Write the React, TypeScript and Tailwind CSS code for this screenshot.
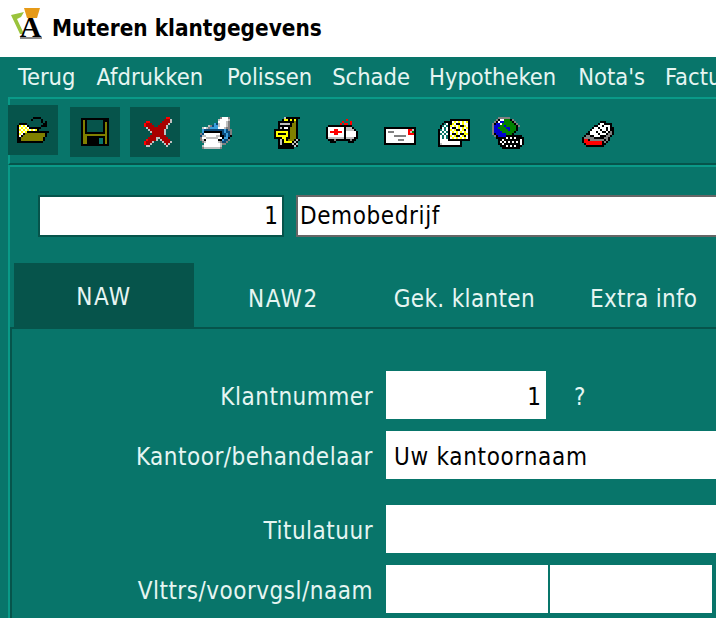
const colors: Record<string, string> = {
  k: '#000000',
  w: '#ffffff',
  g: '#c0c0c0',
  G: '#808080',
  y: '#ffff00',
  o: '#808000',
  r: '#ff0000',
  d: '#a80000',
  b: '#3a9fdc',
  B: '#0a4a7a',
  u: '#0000d0',
  n: '#008000',
  t: '#08756a',
}

// 2x scaled 16 colour toolbar bitmaps, one char per pixel
function PixelIcon({ rows, className }: { rows: string[]; className?: string }) {
  const cols = Math.max(...rows.map((r) => r.length))
  return (
    <svg
      width={cols * 2}
      height={rows.length * 2}
      viewBox={`0 0 ${cols} ${rows.length}`}
      shapeRendering="crispEdges"
      className={`block shrink-0 ${className ?? ''}`}
    >
      {rows.map((row, y) =>
        row.split('').map((c, x) => (colors[c] ? <rect key={`${x}-${y}`} x={x} y={y} width={1} height={1} fill={colors[c]} /> : null)),
      )}
    </svg>
  )
}

const openIcon = [
  '........kkkk....',
  '.......k....k...',
  '............k.k.',
  '.kkkk........kk.',
  'kywywk......kkk.',
  'kwywywkkkkkk....',
  'kywywywywyk.....',
  'kwywykkkkkkkkkkk',
  'kywkooooooooook.',
  'kwkoooooooooook.',
  'kkoooooooooook..',
  'kkoooooooooook..',
  'kkkkkkkkkkkkk...',
]
const saveIcon = [
  'kkkkkkkkkkkkkk',
  'kok........kkk',
  'kok........kok',
  'kok........kok',
  'kok........kok',
  'kok........kok',
  'kok........kok',
  'kokkkkkkkkkkok',
  'kooooooooooook',
  'kookkkkkkkkkok',
  'kookkkkkkttkok',
  'kookkkkkkttkok',
  'kookkkkkkttkok',
  'kkkkkkkkkkkkkk',
]
const deleteIcon = [
  '...........rr.',
  '..........dddg',
  '.rr......ddddg',
  'rddd....ddddg.',
  'rdddd..ddddg..',
  '.gdddddddddg..',
  '..gdddddddg...',
  '...gddddddg...',
  '....ddddddg...',
  '...dddddddd...',
  '..ddddggdddd..',
  '.rddddg.gdddd.',
  'rdddg....gdddg',
  'rddg......gdg.',
  '.gg........g..',
]
const printIcon = [
  '..........GwwwG.',
  '.........gwwwwg.',
  '.........wwwwgG.',
  '.......bBgwwwgG.',
  '....gGBbbgwwwgG.',
  '.gwgGbbbbwwwgGG.',
  '.bBBBBBBBBBBbBGG',
  '.bkkkkkkkkkBbBBG',
  'GBwwwwwwwwkBBbBG',
  'BggwwwwwggkkBbBk',
  'Gwwggggggwwkbbk.',
  'GgkwwwwwwkkbBBG.',
  '.GgwwwwwwgGBBG..',
  '..wwwwwwwwgGG...',
  '.gwwwwwwwwg.....',
  '.GggggggggG.....',
]
const cabinetIcon = [
  '.....gkkkkkkk',
  '....kyykykyk.',
  '..kkkkkkkkok.',
  '..kgggggkook.',
  '..kkkkkkkook.',
  '..kgkwwkoook.',
  'kkkkkkkkoook.',
  'kyyyyyykoook.',
  'kykkkkykoook.',
  'kyyyyyykoook.',
  'kkkkyykkoook.',
  '..kgkykoookgk',
  '..kgkyyyykgk.',
  '..kgkkkkkgkg.',
  '..kkkkkkkkgk.',
  '..kkkkkkkk...',
]
const ambulanceIcon = [
  '..........r.....',
  '........r...r...',
  '.......r.rr.r...',
  '.kkkkkkkkkkkk...',
  'kwwwwwwwwkgggk..',
  'kwwwrrwwwkggggk.',
  'kwrrrrrrwkwwwwwk',
  'kwwwrrwwwkwwwwwk',
  'kwwwwwwwwkwwwwwk',
  'kggggggggkggggkk',
  '.kkkGkkkkkkkGkk.',
  '..kkk......kkk..',
]
const mailIcon = [
  'kkkkkkkkkkkkkkkk',
  'kwwwwwwwwwwwrrgk',
  'kwGGGwwwwwwwrgnk',
  'kwwwwwwwwwwwrrrk',
  'kwwwwGGGGGGwwwwk',
  'kwwwwwwwwwwwwwwk',
  'kwwwwwwGGGwwwwwk',
  'kwwwwwwwwwwwwwwk',
  'kkkkkkkkkkkkkkkk',
]
const docIcon = [
  '......kkkkkkkkkk',
  '...kkkkwywywywyk',
  '..ktwkkywkkwywwk',
  '.ktwtkywywykkywk',
  '.kwtwkwkkwywywyk',
  'ktwtwkywykkwykwk',
  'kwtwtkwywywywywk',
  'ktwtwkwkkywkkyyk',
  'kwtwtkywykkwykwk',
  'kwtwtkwywywywywk',
  'kwwwwkkkkkkkkkkk',
  'kwwwwwwwwwwk....',
  'kgwwwwwwwwwk....',
  'kkkkkkkkkkkk....',
]
const globeIcon = [
  '...GGGGGG.......',
  '..GkwwnnnkG.....',
  '.GkwuunnnnkG....',
  'GkuuwnnnnnnkG...',
  'GuuunnunnnnnkG..',
  'Guunnnnuunnnk...',
  'Guuunnnnunnnk...',
  'Guuuunnnnnnk....',
  'Gkuuuuunnnk.....',
  '.Gkuuuukkkkkkkk.',
  '..kkkkkwkwkwkkkk',
  '...kkwkkkkkkkkwk',
  '...kwkwkwkwkwkwk',
  '...kkwkkkkkkkkwk',
  '....kkkwkwkwkkk.',
  '.....kkkkkkkkk..',
]
const boxIcon = [
  '.........kkk....',
  '........kwwkkkk.',
  '......kkwwkwwwk.',
  '.....kwwkwwwkwkk',
  '....kwwwwkwwkwkk',
  '...kwwwkwwkkwkGk',
  '..kkwwwwkwwwkGGk',
  '.kGGkkwwwkkkGGk.',
  'kGGGGGkkkkkGGk..',
  'krrkGGGGGGGkGk..',
  'krrrrrrrrrkGk...',
  '.krrrrrrrrkk....',
  '..kkkkkkkkk.....',
]

function Logo() {
  return (
    <svg width={32} height={42} viewBox="0 0 32 42" className="mt-2 block shrink-0 self-start">
      <path d="M0 7 L13 4 L10 9 L6 11 L13 26 L9 26 Z" fill="#9ac33c" />
      <path d="M13 0 H29 L26 10 H16 Z" fill="#e69a17" />
      <path d="M9 29 H31 V31 H9 Z" fill="#8a8a8a" />
      <text x="19.5" y="29" textAnchor="middle" fontSize="30" fontWeight="bold" fontFamily="'Liberation Serif', serif" fill="#000">
        A
      </text>
    </svg>
  )
}

function ToolButton({ rows, className, iconClass }: { rows: string[]; className: string; iconClass?: string }) {
  return (
    <div className={`flex h-[50px] w-[50px] shrink-0 items-center justify-center bg-[#06544b] ${className}`}>
      <PixelIcon rows={rows} className={iconClass} />
    </div>
  )
}

function FormRow({ label, className, children }: { label: string; className?: string; children: React.ReactNode }) {
  return (
    <div className={`flex h-12 items-center ${className ?? ''}`}>
      <div className="w-[361px] shrink-0 whitespace-nowrap pt-[3px] text-right text-[24px] leading-none tracking-[0.5px] text-[#e6f5f2]">{label}</div>
      <div className="ml-[13px] flex min-w-0 flex-1 items-center">{children}</div>
    </div>
  )
}

export default function App() {
  return (
    <div className={`flex h-[618px] w-[716px] flex-col overflow-hidden bg-[#08756a] font-["DejaVu_Sans_Condensed","DejaVu_Sans",sans-serif]`}>
      <div className="flex h-[57px] shrink-0 items-center overflow-hidden bg-white pl-[11px]">
        <Logo />
        <span className="ml-[9px] whitespace-nowrap text-[22.4px] font-bold text-black">Muteren klantgegevens</span>
      </div>

      <div className="flex h-[40px] shrink-0 items-center gap-[22px] whitespace-nowrap pt-px pl-[18px] text-[23.5px] text-[#e6f5f2]">
        <span>Terug</span>
        <span className="-ml-px">Afdrukken</span>
        <span className="ml-[2px]">Polissen</span>
        <span className="-ml-[2px]">Schade</span>
        <span className="-ml-[3px]">Hypotheken</span>
        <span>Nota's</span>
        <span className="-ml-[2px]">Facturen</span>
      </div>

      {/* Toolbar */}
      <div className="ml-2 flex h-[68px] shrink-0 items-start border-t-2 border-b-2 border-l-2 border-t-[#0a9a88] border-b-[#06544b] border-l-[#0a9a88]">
        <ToolButton rows={openIcon} className="mt-[6px] -ml-[2px]" />
        <ToolButton rows={saveIcon} className="mt-[8px] ml-3" />
        <ToolButton rows={deleteIcon} className="mt-[8px] ml-[10px]" iconClass="ml-[5px]" />
        <PixelIcon rows={printIcon} className="mt-[18px] ml-5" />
        <PixelIcon rows={cabinetIcon} className="mt-[18px] ml-[42px]" />
        <PixelIcon rows={ambulanceIcon} className="mt-[20px] ml-[26px]" />
        <PixelIcon rows={mailIcon} className="mt-[28px] ml-[26px]" />
        <PixelIcon rows={docIcon} className="mt-[20px] ml-[22px]" />
        <PixelIcon rows={globeIcon} className="mt-[18px] ml-[22px]" />
        <PixelIcon rows={boxIcon} className="mt-[22px] ml-[58px]" />
      </div>

      {/* Page */}
      <div className="ml-2 flex min-h-0 flex-1 flex-col border-t-2 border-l-2 border-[#0a9a88]">
        <div className="flex pt-7 pl-7 text-[24px] text-black">
          <div className="flex h-[42px] w-[246px] shrink-0 items-center justify-end border-2 border-[#06544b] bg-white pr-1">1</div>
          <div className="ml-3 flex h-[42px] flex-1 items-center border-2 border-r-0 border-[#666666] bg-white pl-[2px] tracking-[0.6px]">Demobedrijf</div>
        </div>

        <div className="mt-[26px] ml-1 flex h-16 shrink-0 whitespace-nowrap text-[24px] text-[#e6f5f2]">
          <div className="flex w-[180px] items-center justify-center bg-[#06544b] pt-[4px] tracking-[1.5px]">NAW</div>
          <div className="ml-[54px] flex items-center pt-2 tracking-[1.5px]">NAW2</div>
          <div className="ml-[75px] flex items-center pt-2 tracking-[0.35px]">Gek. klanten</div>
          <div className="ml-[55px] flex items-center pt-2 tracking-[0.3px]">Extra info</div>
        </div>

        <div className="flex flex-1 flex-col border-t-2 border-l-2 border-[#06544b] pt-[42px]">
          <FormRow label="Klantnummer">
            <div className="flex h-12 w-40 items-center justify-end bg-white pt-[3px] pr-[5px] text-[24px] text-black">1</div>
            <span className="ml-[28px] pt-[3px] text-[24px] text-[#e6f5f2]">?</span>
          </FormRow>
          <FormRow label="Kantoor/behandelaar" className="mt-3">
            <div className="flex h-12 flex-1 items-center bg-white pt-[3px] pl-2 text-[24px] tracking-[0.7px] text-black">Uw kantoornaam</div>
          </FormRow>
          <FormRow label="Titulatuur" className="mt-[26px]">
            <div className="h-12 flex-1 bg-white" />
          </FormRow>
          <FormRow label="Vlttrs/voorvgsl/naam" className="mt-3">
            <div className="h-12 w-[162px] bg-white" />
            <div className="ml-[2px] h-12 w-[162px] bg-white" />
          </FormRow>
        </div>
      </div>
    </div>
  )
}
